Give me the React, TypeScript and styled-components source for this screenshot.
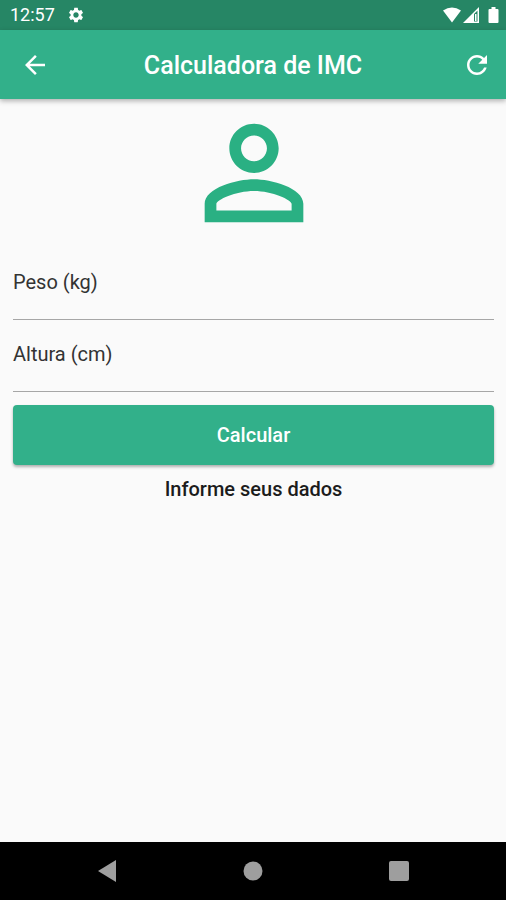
import React, { useState } from 'react';
import styled, { createGlobalStyle } from 'styled-components';

const GREEN = '#32b08a';

const GlobalStyle = createGlobalStyle`
  * { box-sizing: border-box; }
  body {
    margin: 0;
    background: #fafafa;
    color: #1c1c1c;
    font-family: Roboto, 'Liberation Sans', sans-serif;
  }
  button, input { font: inherit; }
`;

const Screen = styled.div`
  display: flex;
  flex-direction: column;
  min-height: 100vh;
`;

const StatusBar = styled.div`
  display: flex;
  align-items: center;
  justify-content: space-between;
  height: 30px;
  padding: 0 7px 0 10px;
  background: #268665;
  color: #fff;
  font-size: 18px;
  line-height: 32px;
`;

const StatusGroup = styled.div<{ $gap: number }>`
  display: flex;
  align-items: center;
  gap: ${({ $gap }) => $gap}px;
`;

const AppBar = styled.header`
  display: grid;
  grid-template-columns: 58px 1fr 58px;
  align-items: center;
  height: 69px;
  background: ${GREEN};
  color: #fff;
  box-shadow: 0 2px 5px rgba(0, 0, 0, 0.3);
`;

const Title = styled.h1`
  margin: 0;
  padding-top: 2px;
  font-size: 25px;
  line-height: 32px;
  font-weight: 500;
  text-align: center;
`;

const IconButton = styled.button<{ $inset?: number }>`
  display: flex;
  align-items: center;
  justify-content: center;
  height: 58px;
  padding: 0 0 0 ${({ $inset = 0 }) => $inset}px;
  border: 0;
  background: none;
  color: inherit;
  cursor: pointer;
`;

const Form = styled.form`
  flex: 1;
  display: flex;
  flex-direction: column;
  padding: 0 12px 0 13px;
`;

const Avatar = styled.svg`
  align-self: center;
  fill: #2ab083;
`;

const Field = styled.div`
  display: flex;
  flex-direction: column;
  height: 72px;
  padding-top: 22px;
  border-bottom: 1px solid #a6a6a6;
`;

const Fields = styled.div`
  padding-top: 1px;
`;

const Label = styled.label`
  color: #333;
  font-size: 20px;
  line-height: 24px;
`;

const Input = styled.input`
  flex: 1;
  min-height: 0;
  width: 100%;
  padding: 0;
  border: 0;
  outline: none;
  background: none;
  font-size: 18px;
  text-align: center;
`;

const Submit = styled.button`
  height: 60px;
  margin: 13px 0 12px;
  border: 0;
  border-radius: 4px;
  background: ${GREEN};
  box-shadow: 0 2px 3px rgba(0, 0, 0, 0.3);
  color: #fff;
  font-size: 20px;
  font-weight: 500;
  cursor: pointer;
`;

const Result = styled.output`
  font-size: 20px;
  line-height: 24px;
  font-weight: 500;
  text-align: center;
`;

const NavBar = styled.nav`
  display: flex;
  justify-content: center;
  align-items: center;
  gap: 86px;
  height: 58px;
  background: #000;
`;

const NavButton = styled.button`
  display: flex;
  justify-content: center;
  width: 60px;
  padding: 0;
  border: 0;
  background: none;
  color: #9e9e9e;
  cursor: pointer;
`;

function Glyph({ d, size = 30 }: { d: string; size?: number }) {
  return (
    <svg width={size} height={size} viewBox="0 0 24 24" fill="currentColor" aria-hidden="true">
      <path d={d} />
    </svg>
  );
}

const GEAR =
  'M19.14 12.94c.04-.3.06-.61.06-.94 0-.32-.02-.64-.07-.94l2.03-1.58c.18-.14.23-.41.12-.61l-1.92-3.32c-.12-.22-.37-.29-.59-.22l-2.39.96c-.5-.38-1.03-.7-1.62-.94l-.36-2.54c-.04-.24-.24-.41-.48-.41h-3.84c-.24 0-.43.17-.47.41l-.36 2.54c-.59.24-1.13.57-1.62.94l-2.39-.96c-.22-.08-.47 0-.59.22L2.74 8.87c-.12.21-.08.47.12.61l2.03 1.58c-.05.3-.09.63-.09.94s.02.64.07.94l-2.03 1.58c-.18.14-.23.41-.12.61l1.92 3.32c.12.22.37.29.59.22l2.39-.96c.5.38 1.03.7 1.62.94l.36 2.54c.05.24.24.41.48.41h3.84c.24 0 .44-.17.47-.41l.36-2.54c.59-.24 1.13-.56 1.62-.94l2.39.96c.22.08.47 0 .59-.22l1.92-3.32c.12-.22.07-.47-.12-.61l-2.01-1.58zM12 15.6c-1.98 0-3.6-1.62-3.6-3.6s1.62-3.6 3.6-3.6 3.6 1.62 3.6 3.6-1.62 3.6-3.6 3.6z';
const BACK = 'M20 11H7.83l5.59-5.59L12 4l-8 8 8 8 1.41-1.41L7.83 13H20v-2z';
const REFRESH =
  'M17.65 6.35C16.2 4.9 14.21 4 12 4c-4.42 0-7.99 3.58-7.99 8s3.57 8 7.99 8c3.73 0 6.84-2.55 7.73-6h-2.08c-.82 2.33-3.04 4-5.65 4-3.31 0-6-2.69-6-6s2.69-6 6-6c1.66 0 3.14.69 4.22 1.78L13 11h7V4l-2.35 2.35z';

const PROMPT = 'Informe seus dados';

export default function App() {
  const [weight, setWeight] = useState('');
  const [height, setHeight] = useState('');
  const [result, setResult] = useState(PROMPT);

  const reset = () => {
    setWeight('');
    setHeight('');
    setResult(PROMPT);
  };

  const calculate = (event: React.FormEvent) => {
    event.preventDefault();
    const metres = Number(height) / 100;
    const bmi = Number(weight) / (metres * metres);
    setResult(Number.isFinite(bmi) && bmi > 0 ? `IMC: ${bmi.toFixed(2)}` : PROMPT);
  };

  return (
    <>
      <GlobalStyle />
      <Screen>
        <StatusBar>
          <StatusGroup $gap={12}>
            <span>12:57</span>
            <Glyph d={GEAR} size={18} />
          </StatusGroup>
          <StatusGroup $gap={1}>
            <svg width="20" height="18" viewBox="0 0 20 18" fill="#fff" aria-hidden="true">
              <path d="M1 4.500Q10-1.500 19 4.500L10 16.500z" />
            </svg>
            <svg width="17" height="18" viewBox="0 0 17 18" aria-hidden="true">
              <path d="M0 17L16 1v16z" fill="#fff" />
              <path d="M11 8L14.500 4.500v11H11z" fill="#268665" />
              <path d="M12 8h1.500v7H12z" fill="#fff" />
            </svg>
            <svg width="18" height="18" viewBox="0 0 18 18" fill="#fff" aria-hidden="true">
              <path d="M10.500 1h4v2h2q1 0 1 1v12q0 1-1 1h-8q-1 0-1-1V4q0-1 1-1h2z" />
            </svg>
          </StatusGroup>
        </StatusBar>
        <AppBar>
          <IconButton $inset={12} type="button" aria-label="Voltar">
            <Glyph d={BACK} />
          </IconButton>
          <Title>Calculadora de IMC</Title>
          <IconButton type="button" aria-label="Recomeçar" onClick={reset}>
            <Glyph d={REFRESH} />
          </IconButton>
        </AppBar>
        <Form onSubmit={calculate}>
          <Avatar width="148" height="148" viewBox="0 0 24 24" aria-hidden="true">
            <path d="M12 5.9c1.16 0 2.1.94 2.1 2.1s-.94 2.1-2.1 2.1S9.9 9.16 9.9 8s.94-2.1 2.1-2.1m0 9c2.97 0 6.1 1.46 6.1 2.1v1.100H5.900V17c0-.64 3.13-2.100 6.100-2.100M12 4C9.790 4 8 5.790 8 8s1.790 4 4 4 4-1.790 4-4-1.790-4-4-4zm0 9c-2.670 0-8 1.340-8 4v3h16v-3c0-2.660-5.330-4-8-4z" />
          </Avatar>
          <Fields>
            <Field>
              <Label htmlFor="peso">Peso (kg)</Label>
              <Input id="peso" inputMode="decimal" value={weight} onChange={(e) => setWeight(e.target.value)} />
            </Field>
            <Field>
              <Label htmlFor="altura">Altura (cm)</Label>
              <Input id="altura" inputMode="decimal" value={height} onChange={(e) => setHeight(e.target.value)} />
            </Field>
          </Fields>
          <Submit type="submit">Calcular</Submit>
          <Result htmlFor="peso altura">{result}</Result>
        </Form>
        <NavBar aria-label="Sistema">
          <NavButton type="button" aria-label="Anterior">
            <svg width="18" height="22" viewBox="0 0 18 22" fill="currentColor" aria-hidden="true">
              <path d="M0 11L18 0v22z" />
            </svg>
          </NavButton>
          <NavButton type="button" aria-label="Início">
            <svg width="20" height="20" viewBox="0 0 20 20" fill="currentColor" aria-hidden="true">
              <circle cx="10" cy="10" r="9.500" />
            </svg>
          </NavButton>
          <NavButton type="button" aria-label="Recentes">
            <svg width="20" height="20" viewBox="0 0 20 20" fill="currentColor" aria-hidden="true">
              <rect width="20" height="20" rx="2" />
            </svg>
          </NavButton>
        </NavBar>
      </Screen>
    </>
  );
}
